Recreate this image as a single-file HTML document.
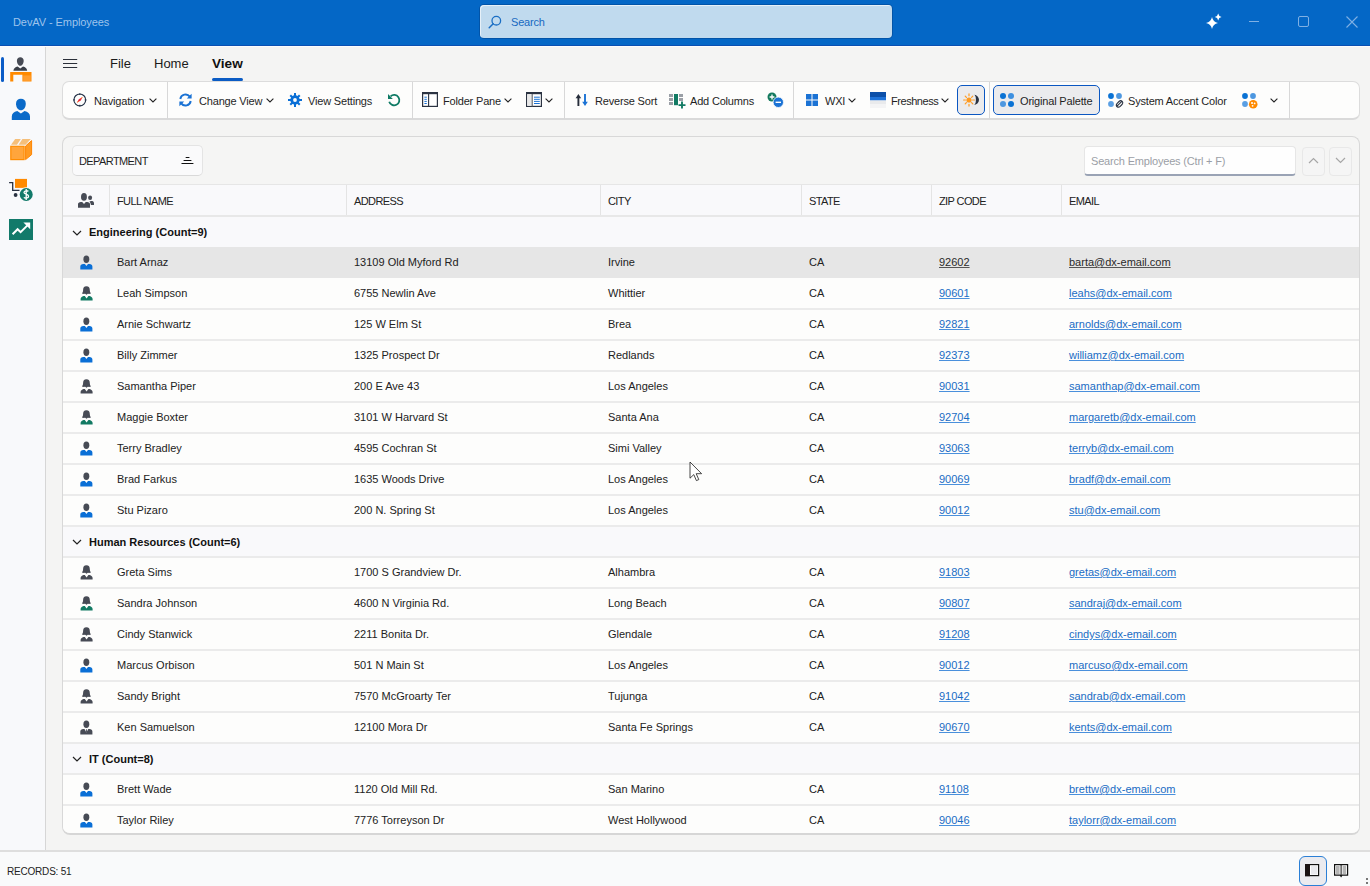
<!DOCTYPE html>
<html><head><meta charset="utf-8">
<style>
*{margin:0;padding:0;box-sizing:border-box}
html,body{width:1370px;height:886px;overflow:hidden;background:#f4f4f3;font-family:"Liberation Sans",sans-serif;color:#1f1f1f;font-size:11px}
.a{position:absolute}
.t{position:absolute;white-space:nowrap;line-height:20px;letter-spacing:-0.18px}
#title{position:absolute;left:0;top:0;width:1370px;height:46px;background:#0467c6;border-bottom:1px solid #0a4fb2}
#side{position:absolute;left:0;top:46px;width:46px;height:805px;background:#f8f9fb;border-right:1px solid #d6d6d6}
#ribbon{position:absolute;left:62px;top:81px;width:1298px;height:39px;background:#fdfdfc;border:1px solid #dcdcdc;border-bottom:2px solid #dadada;border-radius:7px}
.sep{position:absolute;top:0;width:1px;height:36px;background:#e0e0e0}
.chv{position:absolute}
#panel{position:absolute;left:62px;top:136px;width:1298px;height:699px;background:#f5f5f4;border:1px solid #d8d8d8;border-bottom:2px solid #d6d6d6;border-radius:8px;overflow:hidden}
#hdr{position:absolute;left:0;top:47px;width:1298px;height:33px;background:#f9f9fb;border-top:1px solid #e6e6e6;border-bottom:2px solid #e8e8e8}
.hsep{position:absolute;top:0;width:1px;height:30px;background:#e4e4e4}
.hc{position:absolute;top:6px;line-height:20px;white-space:nowrap;color:#222;letter-spacing:-0.6px}
.row{position:absolute;left:0;width:1298px;height:31px;background:#fdfdfc}
.row::before,.grp::before{content:'';position:absolute;left:0;top:-1px;width:1298px;height:2px;background:#ebebeb;z-index:1}
.nd::before{display:none}
.row.sel{background:#e6e6e6}
.cell{position:absolute;top:0;line-height:31px;white-space:nowrap;color:#222}
.lnk{color:#1a6cc4;text-decoration:underline;text-underline-offset:1px;text-decoration-color:#4a90dc}
.sel .lnk{color:#2a2a2a;text-decoration-color:#555}
.ic{position:absolute;width:13px;height:15px}
.ic svg{display:block}
.grp{position:absolute;left:0;width:1298px;height:31px;background:#f9f9fb}
.chev{position:absolute}
.gl{position:absolute;left:26px;top:1px;line-height:30px;font-weight:bold;color:#111;white-space:nowrap}
#status{position:absolute;left:0;top:850px;width:1370px;height:36px;background:#f9fafb;border-top:2px solid #dedede}
</style></head><body>

<!-- TITLE BAR -->
<div id="title">
  <div class="t" style="left:13px;top:12px;color:#9fc4ec;letter-spacing:-0.08px">DevAV - Employees</div>
  <div class="a" style="left:480px;top:5px;width:412px;height:33px;background:#c0daee;border-radius:4px;box-shadow:0 0 0 1px rgba(0,40,100,0.3), inset 1px 1px 0 rgba(255,255,255,0.6)"></div>
  <svg class="a" style="left:488px;top:15px" width="14" height="14" viewBox="0 0 14 14"><circle cx="8.3" cy="5.7" r="4.3" stroke="#1a6ec4" stroke-width="1.3" fill="none"/><path d="M5.2 8.8 L1.2 12.8" stroke="#1a6ec4" stroke-width="1.5" stroke-linecap="round"/></svg>
  <div class="t" style="left:511px;top:12px;color:#1769c1">Search</div>
  <svg class="a" style="left:1204px;top:12px" width="20" height="20" viewBox="0 0 20 20"><path d="M8 5 Q9 10 14 11 Q9 12 8 17 Q7 12 2 11 Q7 10 8 5z" fill="#fff"/><path d="M14.2 1.6 Q14.7 4.5 17.6 5 Q14.7 5.5 14.2 8.4 Q13.7 5.5 10.8 5 Q13.7 4.5 14.2 1.6z" fill="#fff"/></svg>
  <div class="a" style="left:1249px;top:21px;width:10px;height:1.3px;background:#7fb0e4"></div>
  <div class="a" style="left:1298px;top:16px;width:10.5px;height:10.5px;border:1.1px solid #7fb0e4;border-radius:2px"></div>
  <svg class="a" style="left:1346px;top:16px" width="12" height="12" viewBox="0 0 12 12"><path d="M0.5 0.5 L11.5 11.5 M11.5 0.5 L0.5 11.5" stroke="#7fb0e4" stroke-width="1.1"/></svg>
</div>

<div class="a" style="left:0;top:46px;width:1370px;height:1px;background:#fcfcfc;z-index:2"></div>
<!-- SIDEBAR -->
<div id="side">
  <div class="a" style="left:1px;top:11px;width:3px;height:25px;border-radius:2px;background:#0b5cc7"></div>
  <svg class="a" style="left:0;top:0" width="46" height="250" viewBox="0 46 46 250">
    <!-- employees -->
    <path d="M20.3 57.3c-2 0-3.4 1.4-3.4 3.5 0 1.5 .5 2.8 1.2 3.7 .6 .8 1.3 1.3 2.2 1.3s1.6-.5 2.2-1.3c.7-.9 1.2-2.2 1.2-3.7 0-2.1-1.4-3.5-3.4-3.5z" fill="#474b55"/>
    <path d="M17.6 66.6 L20.3 68.6 L23 66.6 C25.4 67.1 26.8 68.4 27.2 70.7 H13.4 C13.8 68.4 15.2 67.1 17.6 66.6z" fill="#3a3f48"/>
    <path d="M10.2 72 H31.5 V81.5 H22.4 V74.8 H13.3 V81.5 H10.2z" fill="#ff8a00"/>
    <rect x="23.2" y="75.4" width="7.5" height="5.5" fill="#ff9d2e"/>
    <!-- customers -->
    <path d="M20.9 98.8c-2.9 0-4.9 1.9-4.9 4.9 0 1.9 .6 3.5 1.5 4.7 .9 1.1 2.1 1.8 3.4 1.8s2.5-.7 3.4-1.8c.9-1.2 1.5-2.8 1.5-4.7 0-3-2-4.9-4.9-4.9z" fill="#0a6ac9"/>
    <path d="M17.3 111.1 L20.9 113.6 L24.5 111.1 C28 111.9 30 113.9 30 116.6 V119.9 H11.8 V116.6 C11.8 113.9 13.8 111.9 17.3 111.1z" fill="#0a6ac9"/>
    <!-- products -->
    <path d="M11 144.8 L15.2 138.9 H20.8 L17 144.8z" fill="#f5bf7a"/>
    <path d="M18.6 144.8 L22.4 138.9 H30.8 L25.6 144.8z" fill="#f5bf7a"/>
    <rect x="10.8" y="146.3" width="13.3" height="13.3" fill="#ffa53c" stroke="#ff8c00" stroke-width="1.2"/>
    <path d="M25.6 146 L31.6 140.6 V154.6 L25.6 159.6z" fill="#ff9a22" stroke="#ff8500" stroke-width="1"/>
    <!-- sales -->
    <rect x="15" y="178.9" width="12" height="9" fill="#ff8a00"/>
    <path d="M9.1 182.7 H12.7 V190.3 H19.5" stroke="#2a3242" stroke-width="1.3" fill="none"/>
    <circle cx="15.6" cy="195" r="1.9" fill="#2a3242"/>
    <circle cx="26.2" cy="194.5" r="7.2" fill="#f8f9fb"/>
    <circle cx="26.2" cy="194.5" r="6.5" fill="#127a6a"/>
    <path d="M28.4 191.4 C27.8 190.6 24 190.2 24 192.4 C24 194.4 28.6 194 28.6 196.3 C28.6 198.6 24.6 198.3 23.9 197.4 M26.2 189 V200" stroke="#fff" stroke-width="1.3" fill="none"/>
    <!-- opportunities -->
    <rect x="9" y="219" width="24" height="21" fill="#127a6a"/>
    <path d="M12.6 234.2 L17.6 229.2 L20.6 232.2 L28.2 224.6" stroke="#fff" stroke-width="2" fill="none"/>
    <path d="M23.4 222.4 H30.2 V229.2z" fill="#fff"/>
  </svg>
</div>

<!-- MENU -->
<svg class="a" style="left:63px;top:58px" width="15" height="11" viewBox="0 0 15 11"><path d="M0 1.5H14.2M0 5.5H14.2M0 9.5H14.2" stroke="#2a2f38" stroke-width="1.2"/></svg>
<div class="t" style="left:110px;top:54px;font-size:13px;color:#1a1a1a;letter-spacing:0">File</div>
<div class="t" style="left:154px;top:54px;font-size:13px;color:#1a1a1a;letter-spacing:0">Home</div>
<div class="t" style="left:212px;top:54px;font-size:13.6px;font-weight:bold;color:#111;letter-spacing:0">View</div>
<div class="a" style="left:212px;top:78px;width:31px;height:3px;border-radius:2px;background:#0b5cc4;z-index:2"></div>

<!-- RIBBON -->
<div id="ribbon"></div>
<div class="a" style="left:167px;top:82px;width:1px;height:37px;background:#d8d8d8"></div>
<div class="a" style="left:412px;top:82px;width:1px;height:37px;background:#d8d8d8"></div>
<div class="a" style="left:564px;top:82px;width:1px;height:37px;background:#d8d8d8"></div>
<div class="a" style="left:793px;top:82px;width:1px;height:37px;background:#d8d8d8"></div>
<div class="a" style="left:989px;top:82px;width:1px;height:37px;background:#d8d8d8"></div>
<div class="a" style="left:1289px;top:82px;width:1px;height:37px;background:#d8d8d8"></div>

<!-- Navigation -->
<svg class="a" style="left:73px;top:92.5px" width="14" height="14" viewBox="0 0 14 14"><circle cx="6.8" cy="6.9" r="5.9" stroke="#253247" stroke-width="1.15" fill="none"/><g fill="#253247"><rect x="6.2" y="0.4" width="1.2" height="1.6"/><rect x="6.2" y="11.8" width="1.2" height="1.6"/><rect x="0.3" y="6.3" width="1.6" height="1.2"/><rect x="11.7" y="6.3" width="1.6" height="1.2"/></g><path d="M3.9 9.8 L5.8 6.3 L9.7 3.9 L7.8 7.5z" fill="#e8283a"/><path d="M3.9 9.8 L4.9 8 L5.7 8.8z" fill="#ff8a1a"/><path d="M9.7 3.9 L8.7 5.7 L7.9 4.9z" fill="#ff8a1a"/></svg>
<div class="t" style="left:94px;top:91px">Navigation</div>
<svg class="a" style="left:149px;top:98px" width="8" height="5" viewBox="0 0 8 5"><path d="M0.6 0.6 L4 4 L7.4 0.6" stroke="#222" stroke-width="1.1" fill="none"/></svg>

<!-- Change View -->
<svg class="a" style="left:178px;top:93px" width="15" height="14" viewBox="0 0 15 14"><path d="M2.3 6 A5.3 5.3 0 0 1 11.8 3.6" stroke="#1a72d4" stroke-width="1.9" fill="none"/><path d="M13.6 0.8 V5.6 H8.8z" fill="#1a72d4"/><path d="M12.7 8 A5.3 5.3 0 0 1 3.2 10.4" stroke="#1a72d4" stroke-width="1.9" fill="none"/><path d="M1.4 13.2 V8.4 H6.2z" fill="#1a72d4"/></svg>
<div class="t" style="left:199px;top:91px">Change View</div>
<svg class="a" style="left:266px;top:98px" width="8" height="5" viewBox="0 0 8 5"><path d="M0.6 0.6 L4 4 L7.4 0.6" stroke="#222" stroke-width="1.1" fill="none"/></svg>

<!-- View Settings gear -->
<svg class="a" style="left:288px;top:93px" width="14" height="14" viewBox="0 0 14 14"><g fill="#0a6fd6"><circle cx="7" cy="7" r="4.7"/><rect x="6" y="0" width="2" height="14"/><rect x="6" y="0.3" width="2" height="13.4" transform="rotate(45 7 7)"/><rect x="6" y="0" width="2" height="14" transform="rotate(90 7 7)"/><rect x="6" y="0.3" width="2" height="13.4" transform="rotate(135 7 7)"/></g><circle cx="7" cy="7" r="1.9" fill="#fdfdfc"/></svg>
<div class="t" style="left:308px;top:91px">View Settings</div>

<!-- reset -->
<svg class="a" style="left:387px;top:93px" width="14" height="14" viewBox="0 0 14 14"><path d="M2.2 8.7 A5.2 5.2 0 1 0 3.6 3.3" stroke="#0e7a64" stroke-width="1.8" fill="none"/><path d="M1 1.1 V5.9 H5.8z" fill="#0e7a64"/></svg>

<!-- Folder Pane -->
<svg class="a" style="left:422px;top:92px" width="16" height="15" viewBox="0 0 16 15"><rect x="0.6" y="0.6" width="14.8" height="13.8" fill="#fff" stroke="#2b3342" stroke-width="1.2"/><rect x="0" y="0" width="16" height="2.2" fill="#2b3342"/><path d="M6.6 2 V14.4" stroke="#2b3342" stroke-width="1.1"/><path d="M2.4 5.2H4.8M2.4 7.3H4.8M2.4 9.4H4.8M2.4 11.5H4.8" stroke="#1a72d4" stroke-width="1"/></svg>
<div class="t" style="left:443px;top:91px">Folder Pane</div>
<svg class="a" style="left:504px;top:98px" width="8" height="5" viewBox="0 0 8 5"><path d="M0.6 0.6 L4 4 L7.4 0.6" stroke="#222" stroke-width="1.1" fill="none"/></svg>
<svg class="a" style="left:526px;top:92px" width="16" height="15" viewBox="0 0 16 15"><rect x="0.6" y="0.6" width="14.8" height="13.8" fill="#fff" stroke="#2b3342" stroke-width="1.2"/><rect x="0" y="0" width="16" height="2.2" fill="#2b3342"/><rect x="1.2" y="2.2" width="4.6" height="11.6" fill="#e8e8e8"/><path d="M6.2 2 V14.4" stroke="#5a606a" stroke-width="1.1"/><path d="M8 5.2H13.8M8 7.3H13.8M8 9.4H13.8M8 11.5H13.8" stroke="#1a72d4" stroke-width="1"/></svg>
<svg class="a" style="left:545px;top:98px" width="8" height="5" viewBox="0 0 8 5"><path d="M0.6 0.6 L4 4 L7.4 0.6" stroke="#222" stroke-width="1.1" fill="none"/></svg>

<!-- Reverse Sort -->
<svg class="a" style="left:575px;top:93px" width="14" height="14" viewBox="0 0 14 14"><path d="M3.4 13 V3.5" stroke="#262d3a" stroke-width="1.9"/><path d="M0.6 5.2 L3.4 1 L6.2 5.2z" fill="#262d3a"/><path d="M10 1 V10.5" stroke="#1a72d4" stroke-width="1.9"/><path d="M7.2 8.8 L10 13 L12.8 8.8z" fill="#1a72d4"/></svg>
<div class="t" style="left:595px;top:91px">Reverse Sort</div>

<!-- Add Columns -->
<svg class="a" style="left:669px;top:93px" width="17" height="16" viewBox="0 0 17 16"><g fill="#9a9fa6"><rect x="0" y="1" width="4" height="3"/><rect x="0" y="5" width="4" height="3"/><rect x="0" y="9" width="4" height="3"/><rect x="10" y="1" width="4" height="3"/><rect x="10" y="5" width="4" height="3"/></g><rect x="5" y="1" width="4" height="11.2" fill="#127a63"/><path d="M13 8.6 V15.6 M9.5 12.1 H16.5" stroke="#127a63" stroke-width="1.9"/></svg>
<div class="t" style="left:690px;top:91px">Add Columns</div>

<!-- plus minus -->
<svg class="a" style="left:767px;top:92px" width="17" height="16" viewBox="0 0 17 16"><circle cx="5" cy="5" r="4.5" fill="#147a5e"/><path d="M5 2.6 V7.4 M2.6 5 H7.4" stroke="#fff" stroke-width="1.3"/><circle cx="11.3" cy="10.3" r="5.2" fill="#1a72d4" stroke="#fdfdfc" stroke-width="0.8"/><path d="M8.6 10.3 H14" stroke="#fff" stroke-width="1.4"/></svg>

<!-- WXI -->
<svg class="a" style="left:806px;top:94px" width="12" height="12" viewBox="0 0 12 12"><g fill="#1a72d4"><rect x="0" y="0" width="5.5" height="5.5"/><rect x="6.5" y="0" width="5.5" height="5.5"/><rect x="0" y="6.5" width="5.5" height="5.5"/><rect x="6.5" y="6.5" width="5.5" height="5.5"/></g></svg>
<div class="t" style="left:825px;top:91px">WXI</div>
<svg class="a" style="left:848px;top:98px" width="8" height="5" viewBox="0 0 8 5"><path d="M0.6 0.6 L4 4 L7.4 0.6" stroke="#222" stroke-width="1.1" fill="none"/></svg>

<!-- Freshness -->
<svg class="a" style="left:870px;top:92px" width="16" height="16" viewBox="0 0 17 16" preserveAspectRatio="none"><rect x="0" y="0" width="17" height="5" fill="#0c4fa8"/><rect x="0" y="5" width="17" height="3.5" fill="#1e72d8"/><rect x="0" y="8.5" width="17" height="3.5" fill="#e9eaec"/><rect x="0" y="12" width="17" height="4" fill="#f4f4f5"/></svg>
<div class="t" style="left:891px;top:91px;letter-spacing:-0.45px">Freshness</div>
<svg class="a" style="left:941px;top:98px" width="8" height="5" viewBox="0 0 8 5"><path d="M0.6 0.6 L4 4 L7.4 0.6" stroke="#222" stroke-width="1.1" fill="none"/></svg>

<!-- toggle light/dark -->
<div class="a" style="left:957px;top:85px;width:28px;height:30px;background:#ebebed;border:1.2px solid #0b57c2;border-radius:5px"></div>
<svg class="a" style="left:963px;top:93px" width="17" height="14" viewBox="0 0 17 14"><circle cx="6" cy="7" r="2.6" fill="#ff9a1f"/><g stroke="#ff9a1f" stroke-width="1.2" stroke-linecap="round"><path d="M6 0.9V2.7M6 11.3V13.1M0.6 7H2.4M9.6 7H11.4M2.2 3.2L3.4 4.4M8.6 9.6L9.8 10.8M2.2 10.8L3.4 9.6M8.6 4.4L9.8 3.2"/></g><path d="M10.6 1.7 A5.4 5.1 0 0 1 10.6 11.9 A2.3 5.1 0 0 0 10.6 1.7z" fill="#2b3342"/></svg>

<!-- Original Palette -->
<div class="a" style="left:993px;top:85px;width:107px;height:30px;background:#ebebed;border:1.2px solid #0b57c2;border-radius:5px"></div>
<svg class="a" style="left:999px;top:92px" width="16" height="16" viewBox="0 0 16 16"><circle cx="4" cy="4" r="3" fill="#0a72d4"/><circle cx="12" cy="4" r="3" fill="#3d8fe0"/><circle cx="4" cy="12" r="3" fill="#4d97e0"/><circle cx="12" cy="12" r="3" fill="#0a72d4"/></svg>
<div class="t" style="left:1020px;top:91px">Original Palette</div>

<!-- System Accent Color -->
<svg class="a" style="left:1107px;top:92px" width="17" height="17" viewBox="0 0 17 17"><circle cx="4" cy="4" r="2.9" fill="#0a72d4"/><circle cx="12" cy="4" r="2.9" fill="#4d97e0"/><circle cx="4" cy="12" r="2.9" fill="#5a9fe3"/><path d="M9.3 14.8 L14.8 9.3 M10.2 11.3 L12 9.5 C13 8.5 14.4 8.5 15.2 9.3 C16 10.1 16 11.5 15 12.5 L13.2 14.3 C12.2 15.3 10.8 15.3 10 14.5 C9.2 13.7 9.2 12.3 10.2 11.3z" stroke="#2b3342" stroke-width="1.1" fill="none"/></svg>
<div class="t" style="left:1128px;top:91px">System Accent Color</div>

<!-- palette 3 -->
<svg class="a" style="left:1241px;top:92px" width="17" height="17" viewBox="0 0 17 17"><circle cx="4" cy="4" r="2.9" fill="#0a72d4"/><circle cx="12" cy="4" r="2.9" fill="#4d97e0"/><circle cx="4" cy="12" r="2.9" fill="#5a9fe3"/><circle cx="12.2" cy="12.2" r="4.3" fill="#ff8a00"/><circle cx="11" cy="11" r="1" fill="#fff"/><circle cx="13.6" cy="11.4" r="0.9" fill="#fff"/><circle cx="11.6" cy="13.8" r="0.9" fill="#fff"/></svg>
<svg class="a" style="left:1270px;top:98px" width="8" height="5" viewBox="0 0 8 5"><path d="M0.6 0.6 L4 4 L7.4 0.6" stroke="#222" stroke-width="1.1" fill="none"/></svg>


<!-- GRID PANEL -->
<div id="panel">
  <div class="a" style="left:9px;top:8px;width:131px;height:31px;background:#fafafb;border:1px solid #e4e4e4;border-bottom-color:#d9d9d9;border-radius:5px"></div>
  <div class="t" style="left:16px;top:14px;color:#1f1f1f;letter-spacing:-0.6px">DEPARTMENT</div>
  <svg class="a" style="left:118px;top:19px" width="14" height="9" viewBox="0 0 14 9"><path d="M0.9 7.5 H12 M3 4.5 H10 M5.1 1.5 H8" stroke="#111" stroke-width="1.1" stroke-linecap="round"/></svg>
  <div class="a" style="left:1021px;top:9px;width:212px;height:30px;background:#fefefe;border:1px solid #e6e6e6;border-bottom:2px solid #9aa3b5;border-radius:4px"></div>
  <div class="t" style="left:1028px;top:14px;color:#9b9ea6">Search Employees (Ctrl + F)</div>
  <div class="a" style="left:1239px;top:10px;width:23px;height:29px;background:#f5f5f5;border:1px solid #e8e8e8;border-radius:4px"></div>
  <svg class="a" style="left:1245px;top:20px" width="11" height="7" viewBox="0 0 11 7"><path d="M1 6 L5.5 1.5 L10 6" stroke="#a6a6a6" stroke-width="1.2" fill="none"/></svg>
  <div class="a" style="left:1266px;top:10px;width:23px;height:29px;background:#f5f5f5;border:1px solid #e8e8e8;border-radius:4px"></div>
  <svg class="a" style="left:1272px;top:20px" width="11" height="7" viewBox="0 0 11 7"><path d="M1 1 L5.5 5.5 L10 1" stroke="#a6a6a6" stroke-width="1.2" fill="none"/></svg>

  <div id="hdr">
    <svg class="a" style="left:14px;top:7px" width="18" height="17" viewBox="0 0 18 17"><ellipse cx="6.95" cy="4.9" rx="2.95" ry="3.8" fill="#474b55"/><path d="M1 15.8 V12.2 C1 11 2.2 10.4 3.8 10.1 H5.2 L7 12 L8.8 10.1 H10.2 C11.8 10.4 13 11 13 12.2 V15.8z" fill="#474b55"/><ellipse cx="13.1" cy="5.7" rx="2" ry="2.2" fill="#474b55"/><path d="M12.4 9.8 C12.9 9.2 13.5 8.9 14.2 8.9 H15.2 C16.3 9.2 17 10 17 11.2 V13 H13.9 C13.8 11.7 13.3 10.5 12.4 9.8z" fill="#474b55"/></svg>
    <div class="hsep" style="left:46px"></div><div class="hc" style="left:54px">FULL NAME</div><div class="hsep" style="left:283px"></div><div class="hc" style="left:291px">ADDRESS</div><div class="hsep" style="left:537px"></div><div class="hc" style="left:545px">CITY</div><div class="hsep" style="left:738px"></div><div class="hc" style="left:746px">STATE</div><div class="hsep" style="left:868px"></div><div class="hc" style="left:876px">ZIP CODE</div><div class="hsep" style="left:998px"></div><div class="hc" style="left:1006px">EMAIL</div>
  </div>
  <div class="grp nd" style="top:80px;height:30px"><svg class="chev" width="10" height="6" viewBox="0 0 10 6" style="left:9px;top:13px"><path d="M1 1 L5 5 L9 1" stroke="#222" stroke-width="1.2" fill="none"/></svg><div class="gl" style="top:0">Engineering (Count=9)</div></div><div class="row sel nd" style="top:110px"><div class="ic" style="left:17px;top:8px"><svg width="13" height="15" viewBox="0 0 13 15"><ellipse cx="6.35" cy="4.25" rx="2.95" ry="3.65" fill="#474b55"/><path d="M0.3 14.6 V11.4 C0.3 10.1 1.5 9.4 3.2 9 H4.9 L6.4 10.9 L8 9 H9.5 C11.2 9.4 12.4 10.1 12.4 11.4 V14.6z" fill="#0a6fd6"/></svg></div><div class="cell" style="left:54px">Bart Arnaz</div><div class="cell" style="left:291px">13109 Old Myford Rd</div><div class="cell" style="left:545px">Irvine</div><div class="cell" style="left:746px">CA</div><div class="cell" style="left:876px"><span class="lnk">92602</span></div><div class="cell" style="left:1006px"><span class="lnk">barta@dx-email.com</span></div></div><div class="row nd" style="top:141px"><div class="ic" style="left:17px;top:8px"><svg width="13" height="15" viewBox="0 0 13 15"><path d="M6.45 0.3 C4 0.3 3.1 2 3.1 4 C3.1 5.5 2.6 6.5 1.9 7.6 C3 8 4.5 8 5.2 7.8 L6.5 8.8 L7.8 7.8 C8.5 8 10 8 11 7.6 C10.3 6.5 9.8 5.5 9.8 4 C9.8 2 8.9 0.3 6.45 0.3z" fill="#474b55"/><path d="M0.6 14.4 V13 C0.6 11.8 1.8 10.6 3.6 10.1 H4.8 L6.6 12.4 L8.4 10.1 H9.6 C11.4 10.6 12.6 11.8 12.6 13 V14.4z" fill="#127a63"/></svg></div><div class="cell" style="left:54px">Leah Simpson</div><div class="cell" style="left:291px">6755 Newlin Ave</div><div class="cell" style="left:545px">Whittier</div><div class="cell" style="left:746px">CA</div><div class="cell" style="left:876px"><span class="lnk">90601</span></div><div class="cell" style="left:1006px"><span class="lnk">leahs@dx-email.com</span></div></div><div class="row" style="top:172px"><div class="ic" style="left:17px;top:8px"><svg width="13" height="15" viewBox="0 0 13 15"><ellipse cx="6.35" cy="4.25" rx="2.95" ry="3.65" fill="#474b55"/><path d="M0.3 14.6 V11.4 C0.3 10.1 1.5 9.4 3.2 9 H4.9 L6.4 10.9 L8 9 H9.5 C11.2 9.4 12.4 10.1 12.4 11.4 V14.6z" fill="#0a6fd6"/></svg></div><div class="cell" style="left:54px">Arnie Schwartz</div><div class="cell" style="left:291px">125 W Elm St</div><div class="cell" style="left:545px">Brea</div><div class="cell" style="left:746px">CA</div><div class="cell" style="left:876px"><span class="lnk">92821</span></div><div class="cell" style="left:1006px"><span class="lnk">arnolds@dx-email.com</span></div></div><div class="row" style="top:203px"><div class="ic" style="left:17px;top:8px"><svg width="13" height="15" viewBox="0 0 13 15"><ellipse cx="6.35" cy="4.25" rx="2.95" ry="3.65" fill="#474b55"/><path d="M0.3 14.6 V11.4 C0.3 10.1 1.5 9.4 3.2 9 H4.9 L6.4 10.9 L8 9 H9.5 C11.2 9.4 12.4 10.1 12.4 11.4 V14.6z" fill="#0a6fd6"/></svg></div><div class="cell" style="left:54px">Billy Zimmer</div><div class="cell" style="left:291px">1325 Prospect Dr</div><div class="cell" style="left:545px">Redlands</div><div class="cell" style="left:746px">CA</div><div class="cell" style="left:876px"><span class="lnk">92373</span></div><div class="cell" style="left:1006px"><span class="lnk">williamz@dx-email.com</span></div></div><div class="row" style="top:234px"><div class="ic" style="left:17px;top:8px"><svg width="13" height="15" viewBox="0 0 13 15"><path d="M6.45 0.3 C4 0.3 3.1 2 3.1 4 C3.1 5.5 2.6 6.5 1.9 7.6 C3 8 4.5 8 5.2 7.8 L6.5 8.8 L7.8 7.8 C8.5 8 10 8 11 7.6 C10.3 6.5 9.8 5.5 9.8 4 C9.8 2 8.9 0.3 6.45 0.3z" fill="#474b55"/><path d="M0.6 14.4 V13 C0.6 11.8 1.8 10.6 3.6 10.1 H4.8 L6.6 12.4 L8.4 10.1 H9.6 C11.4 10.6 12.6 11.8 12.6 13 V14.4z" fill="#474b55"/></svg></div><div class="cell" style="left:54px">Samantha Piper</div><div class="cell" style="left:291px">200 E Ave 43</div><div class="cell" style="left:545px">Los Angeles</div><div class="cell" style="left:746px">CA</div><div class="cell" style="left:876px"><span class="lnk">90031</span></div><div class="cell" style="left:1006px"><span class="lnk">samanthap@dx-email.com</span></div></div><div class="row" style="top:265px"><div class="ic" style="left:17px;top:8px"><svg width="13" height="15" viewBox="0 0 13 15"><path d="M6.45 0.3 C4 0.3 3.1 2 3.1 4 C3.1 5.5 2.6 6.5 1.9 7.6 C3 8 4.5 8 5.2 7.8 L6.5 8.8 L7.8 7.8 C8.5 8 10 8 11 7.6 C10.3 6.5 9.8 5.5 9.8 4 C9.8 2 8.9 0.3 6.45 0.3z" fill="#474b55"/><path d="M0.6 14.4 V13 C0.6 11.8 1.8 10.6 3.6 10.1 H4.8 L6.6 12.4 L8.4 10.1 H9.6 C11.4 10.6 12.6 11.8 12.6 13 V14.4z" fill="#127a63"/></svg></div><div class="cell" style="left:54px">Maggie Boxter</div><div class="cell" style="left:291px">3101 W Harvard St</div><div class="cell" style="left:545px">Santa Ana</div><div class="cell" style="left:746px">CA</div><div class="cell" style="left:876px"><span class="lnk">92704</span></div><div class="cell" style="left:1006px"><span class="lnk">margaretb@dx-email.com</span></div></div><div class="row" style="top:296px"><div class="ic" style="left:17px;top:8px"><svg width="13" height="15" viewBox="0 0 13 15"><ellipse cx="6.35" cy="4.25" rx="2.95" ry="3.65" fill="#474b55"/><path d="M0.3 14.6 V11.4 C0.3 10.1 1.5 9.4 3.2 9 H4.9 L6.4 10.9 L8 9 H9.5 C11.2 9.4 12.4 10.1 12.4 11.4 V14.6z" fill="#0a6fd6"/></svg></div><div class="cell" style="left:54px">Terry Bradley</div><div class="cell" style="left:291px">4595 Cochran St</div><div class="cell" style="left:545px">Simi Valley</div><div class="cell" style="left:746px">CA</div><div class="cell" style="left:876px"><span class="lnk">93063</span></div><div class="cell" style="left:1006px"><span class="lnk">terryb@dx-email.com</span></div></div><div class="row" style="top:327px"><div class="ic" style="left:17px;top:8px"><svg width="13" height="15" viewBox="0 0 13 15"><ellipse cx="6.35" cy="4.25" rx="2.95" ry="3.65" fill="#474b55"/><path d="M0.3 14.6 V11.4 C0.3 10.1 1.5 9.4 3.2 9 H4.9 L6.4 10.9 L8 9 H9.5 C11.2 9.4 12.4 10.1 12.4 11.4 V14.6z" fill="#0a6fd6"/></svg></div><div class="cell" style="left:54px">Brad Farkus</div><div class="cell" style="left:291px">1635 Woods Drive</div><div class="cell" style="left:545px">Los Angeles</div><div class="cell" style="left:746px">CA</div><div class="cell" style="left:876px"><span class="lnk">90069</span></div><div class="cell" style="left:1006px"><span class="lnk">bradf@dx-email.com</span></div></div><div class="row" style="top:358px"><div class="ic" style="left:17px;top:8px"><svg width="13" height="15" viewBox="0 0 13 15"><ellipse cx="6.35" cy="4.25" rx="2.95" ry="3.65" fill="#474b55"/><path d="M0.3 14.6 V11.4 C0.3 10.1 1.5 9.4 3.2 9 H4.9 L6.4 10.9 L8 9 H9.5 C11.2 9.4 12.4 10.1 12.4 11.4 V14.6z" fill="#0a6fd6"/></svg></div><div class="cell" style="left:54px">Stu Pizaro</div><div class="cell" style="left:291px">200 N. Spring St</div><div class="cell" style="left:545px">Los Angeles</div><div class="cell" style="left:746px">CA</div><div class="cell" style="left:876px"><span class="lnk">90012</span></div><div class="cell" style="left:1006px"><span class="lnk">stu@dx-email.com</span></div></div><div class="grp" style="top:389px;height:31px"><svg class="chev" width="10" height="6" viewBox="0 0 10 6" style="left:9px;top:13px"><path d="M1 1 L5 5 L9 1" stroke="#222" stroke-width="1.2" fill="none"/></svg><div class="gl">Human Resources (Count=6)</div></div><div class="row" style="top:420px"><div class="ic" style="left:17px;top:8px"><svg width="13" height="15" viewBox="0 0 13 15"><path d="M6.45 0.3 C4 0.3 3.1 2 3.1 4 C3.1 5.5 2.6 6.5 1.9 7.6 C3 8 4.5 8 5.2 7.8 L6.5 8.8 L7.8 7.8 C8.5 8 10 8 11 7.6 C10.3 6.5 9.8 5.5 9.8 4 C9.8 2 8.9 0.3 6.45 0.3z" fill="#474b55"/><path d="M0.6 14.4 V13 C0.6 11.8 1.8 10.6 3.6 10.1 H4.8 L6.6 12.4 L8.4 10.1 H9.6 C11.4 10.6 12.6 11.8 12.6 13 V14.4z" fill="#474b55"/></svg></div><div class="cell" style="left:54px">Greta Sims</div><div class="cell" style="left:291px">1700 S Grandview Dr.</div><div class="cell" style="left:545px">Alhambra</div><div class="cell" style="left:746px">CA</div><div class="cell" style="left:876px"><span class="lnk">91803</span></div><div class="cell" style="left:1006px"><span class="lnk">gretas@dx-email.com</span></div></div><div class="row" style="top:451px"><div class="ic" style="left:17px;top:8px"><svg width="13" height="15" viewBox="0 0 13 15"><path d="M6.45 0.3 C4 0.3 3.1 2 3.1 4 C3.1 5.5 2.6 6.5 1.9 7.6 C3 8 4.5 8 5.2 7.8 L6.5 8.8 L7.8 7.8 C8.5 8 10 8 11 7.6 C10.3 6.5 9.8 5.5 9.8 4 C9.8 2 8.9 0.3 6.45 0.3z" fill="#474b55"/><path d="M0.6 14.4 V13 C0.6 11.8 1.8 10.6 3.6 10.1 H4.8 L6.6 12.4 L8.4 10.1 H9.6 C11.4 10.6 12.6 11.8 12.6 13 V14.4z" fill="#127a63"/></svg></div><div class="cell" style="left:54px">Sandra Johnson</div><div class="cell" style="left:291px">4600 N Virginia Rd.</div><div class="cell" style="left:545px">Long Beach</div><div class="cell" style="left:746px">CA</div><div class="cell" style="left:876px"><span class="lnk">90807</span></div><div class="cell" style="left:1006px"><span class="lnk">sandraj@dx-email.com</span></div></div><div class="row" style="top:482px"><div class="ic" style="left:17px;top:8px"><svg width="13" height="15" viewBox="0 0 13 15"><path d="M6.45 0.3 C4 0.3 3.1 2 3.1 4 C3.1 5.5 2.6 6.5 1.9 7.6 C3 8 4.5 8 5.2 7.8 L6.5 8.8 L7.8 7.8 C8.5 8 10 8 11 7.6 C10.3 6.5 9.8 5.5 9.8 4 C9.8 2 8.9 0.3 6.45 0.3z" fill="#474b55"/><path d="M0.6 14.4 V13 C0.6 11.8 1.8 10.6 3.6 10.1 H4.8 L6.6 12.4 L8.4 10.1 H9.6 C11.4 10.6 12.6 11.8 12.6 13 V14.4z" fill="#474b55"/></svg></div><div class="cell" style="left:54px">Cindy Stanwick</div><div class="cell" style="left:291px">2211 Bonita Dr.</div><div class="cell" style="left:545px">Glendale</div><div class="cell" style="left:746px">CA</div><div class="cell" style="left:876px"><span class="lnk">91208</span></div><div class="cell" style="left:1006px"><span class="lnk">cindys@dx-email.com</span></div></div><div class="row" style="top:513px"><div class="ic" style="left:17px;top:8px"><svg width="13" height="15" viewBox="0 0 13 15"><ellipse cx="6.35" cy="4.25" rx="2.95" ry="3.65" fill="#474b55"/><path d="M0.3 14.6 V11.4 C0.3 10.1 1.5 9.4 3.2 9 H4.9 L6.4 10.9 L8 9 H9.5 C11.2 9.4 12.4 10.1 12.4 11.4 V14.6z" fill="#0a6fd6"/></svg></div><div class="cell" style="left:54px">Marcus Orbison</div><div class="cell" style="left:291px">501 N Main St</div><div class="cell" style="left:545px">Los Angeles</div><div class="cell" style="left:746px">CA</div><div class="cell" style="left:876px"><span class="lnk">90012</span></div><div class="cell" style="left:1006px"><span class="lnk">marcuso@dx-email.com</span></div></div><div class="row" style="top:544px"><div class="ic" style="left:17px;top:8px"><svg width="13" height="15" viewBox="0 0 13 15"><path d="M6.45 0.3 C4 0.3 3.1 2 3.1 4 C3.1 5.5 2.6 6.5 1.9 7.6 C3 8 4.5 8 5.2 7.8 L6.5 8.8 L7.8 7.8 C8.5 8 10 8 11 7.6 C10.3 6.5 9.8 5.5 9.8 4 C9.8 2 8.9 0.3 6.45 0.3z" fill="#474b55"/><path d="M0.6 14.4 V13 C0.6 11.8 1.8 10.6 3.6 10.1 H4.8 L6.6 12.4 L8.4 10.1 H9.6 C11.4 10.6 12.6 11.8 12.6 13 V14.4z" fill="#474b55"/></svg></div><div class="cell" style="left:54px">Sandy Bright</div><div class="cell" style="left:291px">7570 McGroarty Ter</div><div class="cell" style="left:545px">Tujunga</div><div class="cell" style="left:746px">CA</div><div class="cell" style="left:876px"><span class="lnk">91042</span></div><div class="cell" style="left:1006px"><span class="lnk">sandrab@dx-email.com</span></div></div><div class="row" style="top:575px"><div class="ic" style="left:17px;top:8px"><svg width="13" height="15" viewBox="0 0 13 15"><ellipse cx="6.35" cy="4.25" rx="2.95" ry="3.65" fill="#474b55"/><path d="M0.3 14.6 V11.4 C0.3 10.1 1.5 9.4 3.2 9 H4.5 L6.4 12.6 L8.3 9 H9.5 C11.2 9.4 12.4 10.1 12.4 11.4 V14.6z" fill="#474b55"/><path d="M6 9.2 H6.8 L6.9 11.6 L6.4 12.6 L5.9 11.6z" fill="#474b55"/></svg></div><div class="cell" style="left:54px">Ken Samuelson</div><div class="cell" style="left:291px">12100 Mora Dr</div><div class="cell" style="left:545px">Santa Fe Springs</div><div class="cell" style="left:746px">CA</div><div class="cell" style="left:876px"><span class="lnk">90670</span></div><div class="cell" style="left:1006px"><span class="lnk">kents@dx-email.com</span></div></div><div class="grp" style="top:606px;height:31px"><svg class="chev" width="10" height="6" viewBox="0 0 10 6" style="left:9px;top:13px"><path d="M1 1 L5 5 L9 1" stroke="#222" stroke-width="1.2" fill="none"/></svg><div class="gl">IT (Count=8)</div></div><div class="row" style="top:637px"><div class="ic" style="left:17px;top:8px"><svg width="13" height="15" viewBox="0 0 13 15"><ellipse cx="6.35" cy="4.25" rx="2.95" ry="3.65" fill="#474b55"/><path d="M0.3 14.6 V11.4 C0.3 10.1 1.5 9.4 3.2 9 H4.9 L6.4 10.9 L8 9 H9.5 C11.2 9.4 12.4 10.1 12.4 11.4 V14.6z" fill="#0a6fd6"/></svg></div><div class="cell" style="left:54px">Brett Wade</div><div class="cell" style="left:291px">1120 Old Mill Rd.</div><div class="cell" style="left:545px">San Marino</div><div class="cell" style="left:746px">CA</div><div class="cell" style="left:876px"><span class="lnk">91108</span></div><div class="cell" style="left:1006px"><span class="lnk">brettw@dx-email.com</span></div></div><div class="row" style="top:668px"><div class="ic" style="left:17px;top:8px"><svg width="13" height="15" viewBox="0 0 13 15"><ellipse cx="6.35" cy="4.25" rx="2.95" ry="3.65" fill="#474b55"/><path d="M0.3 14.6 V11.4 C0.3 10.1 1.5 9.4 3.2 9 H4.9 L6.4 10.9 L8 9 H9.5 C11.2 9.4 12.4 10.1 12.4 11.4 V14.6z" fill="#0a6fd6"/></svg></div><div class="cell" style="left:54px">Taylor Riley</div><div class="cell" style="left:291px">7776 Torreyson Dr</div><div class="cell" style="left:545px">West Hollywood</div><div class="cell" style="left:746px">CA</div><div class="cell" style="left:876px"><span class="lnk">90046</span></div><div class="cell" style="left:1006px"><span class="lnk">taylorr@dx-email.com</span></div></div>
</div>

<!-- STATUS -->
<div id="status">
  <div class="t" style="left:7px;top:10px;font-size:10px;color:#222;letter-spacing:-0.2px">RECORDS: 51</div>
  <div class="a" style="left:1298.5px;top:3.5px;width:28.5px;height:30px;border:1.5px solid #2b7fd6;border-radius:6px;background:#ebebef"></div>
  <svg class="a" style="left:1305px;top:12px" width="15" height="13" viewBox="0 0 15 13"><rect x="0.6" y="0.6" width="13" height="11" fill="#fff" stroke="#111" stroke-width="1.2"/><rect x="0" y="0" width="5" height="12.2" fill="#1a1212"/><rect x="6" y="1.8" width="6.4" height="8.6" fill="#e9e9ee"/></svg>
  <svg class="a" style="left:1334px;top:12px" width="15" height="14" viewBox="0 0 15 14"><path d="M0.6 0.6 H13.6 V11.2 H8 L7.1 12.4 L6.2 11.2 H0.6z" fill="#fff" stroke="#111" stroke-width="1.2"/><path d="M7.1 1 V11" stroke="#111" stroke-width="1"/><path d="M2 3H5.6M2 5H5.6M2 7H5.6M2 9H5.6M8.6 3H12.2M8.6 5H12.2M8.6 7H12.2M8.6 9H12.2" stroke="#444" stroke-width="0.8"/></svg>
  <div class="a" style="left:1366px;top:26px;width:2px;height:2px;background:#777"></div>
  <div class="a" style="left:1366px;top:30px;width:2px;height:2px;background:#777"></div>
</div>

<!-- cursor -->
<svg class="a" style="left:689px;top:461px;z-index:5" width="15" height="21" viewBox="0 0 15 21"><path d="M1 1 V17.2 L4.8 13.6 L7.4 19.6 L9.8 18.6 L7.2 12.7 H12.6z" fill="#fff" stroke="#1a1a1a" stroke-width="0.8" stroke-linejoin="round"/></svg>
</body></html>
